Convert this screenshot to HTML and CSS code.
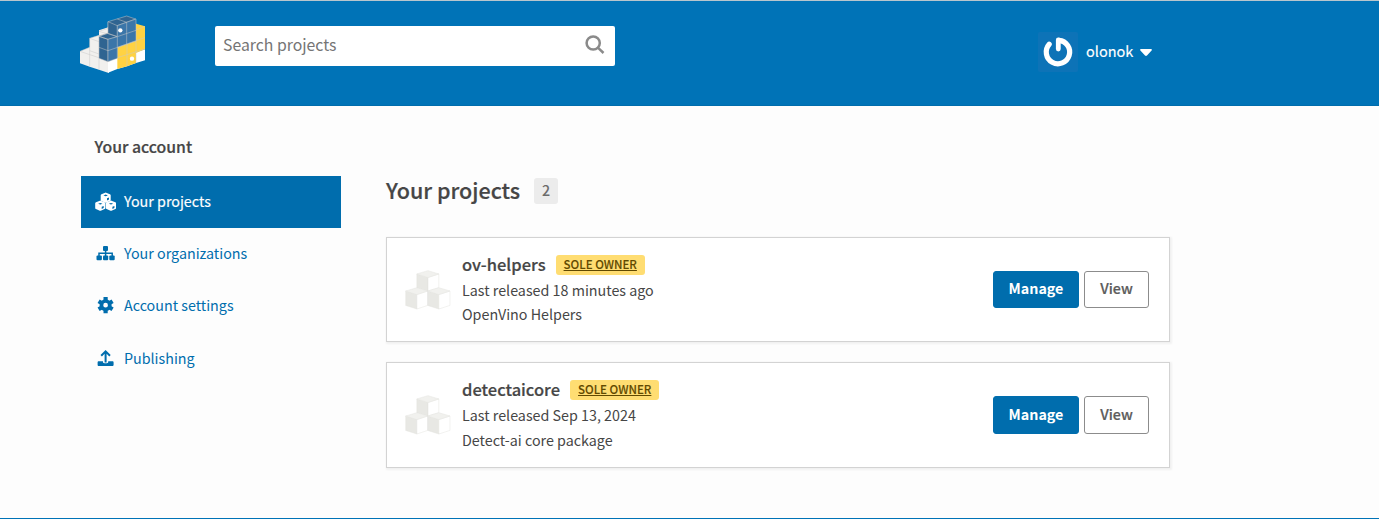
FILE: index.html
```html
<!DOCTYPE html>
<html lang="en">
<head>
<meta charset="utf-8">
<title>Your projects</title>
<link rel="stylesheet" href="styles.css">
</head>
<body>
<svg width="0" height="0" class="defs">
  <symbol id="boxes" viewBox="73 312 140 122">
    <g stroke="#e4e4e1" stroke-width="1.5" stroke-linejoin="round">
      <path fill="#e8e8e4" d="M109 324l34 11v41l-34-10z"/><path fill="#fff" d="M143 335l33-11v42l-33 10z"/><path fill="#f1f1ee" d="M109 324l34-10 33 10-33 11z"/>
      <path fill="#e8e8e4" d="M75 376l34 11v44l-34-11z"/><path fill="#fff" d="M109 387l33-11v44l-33 11z"/><path fill="#f1f1ee" d="M75 376l34-10 33 10-33 11z"/>
      <path fill="#e8e8e4" d="M142 376l34 11v44l-34-11z"/><path fill="#fff" d="M176 387l34-11v44l-34 11z"/><path fill="#f1f1ee" d="M142 376l34-10 34 10-34 11z"/>
    </g>
  </symbol>
</svg>
<header class="header">
  <a class="logo">
    <svg viewBox="27 42 204 183" width="68" height="61">
      <g stroke="#c9c9c9" stroke-width="1.5" stroke-linejoin="round">
        <path stroke="none" fill="#f1f0ee" d="M30 154l29-12v-27l28-9V91l30-10v137h-3l-27-9-28-9-29-10z"/>
        <path fill="none" d="M30 154l29 10 28 9M59 115v85M59 115l28 10M59 152l28 10M30 154l29-12M87 106v103M59 115l28-9 27 11M87 94l27 8M87 94l27-9"/>
        <path stroke="none" fill="#fff" d="M114 183l111-35v33l-27 8-27 10-29 8-28 11z"/>
        <path stroke="none" fill="#ffd242" d="M142 142l56-20V71l27 8v69l-27 11v30l-27 10-29 8z"/>
        <path fill="none" d="M198 90l27-11M198 122l27-9M171 132v67M198 122v67M142 173l83-26"/>
        <path fill="#2f6491" d="M87 108l27-9V65l56-17 27 9-56 20-27 22z"/>
        <path fill="#2f6491" d="M87 109l27 9v67l-27-10zM87 109l27-9 28 10-28 8zM114 65l28 12v33l-28-9z"/>
        <path fill="#3b76a9" d="M114 118l28-8V77l56-20v65l-56 20v33l-28 10z"/>
        <path fill="none" d="M87 142l27 10 84-29M142 110l56-19M142 110v32M170 67v65M142 57l28 10"/>
      </g>
      <circle cx="151" cy="91" r="6.500" fill="#fff"/><circle cx="186" cy="176" r="6.500" fill="#fff"/>
    </svg>
  </a>
  <div class="search"><span>Search projects</span>
    <svg viewBox="0 0 20 20" width="20" height="20" fill="none" stroke="#8a8a8a" stroke-width="2.5"><circle cx="8.200" cy="8" r="6.600"/><path d="M12.900 12.700l5.600 5.300"/></svg>
  </div>
  <div class="user">
    <svg class="avatar" viewBox="0 0 40 40" width="40" height="40"><rect width="40" height="40" rx="2" fill="#0d73b7"/><path d="M11.200 12.300A11.700 11.700 0 1 0 21 8.400" fill="none" stroke="#fff" stroke-width="5.200" stroke-linecap="round"/><path d="M20.300 8v9" stroke="#fff" stroke-width="4.800" stroke-linecap="round"/></svg>
    <span class="name">olonok</span>
    <svg viewBox="0 0 12 7" width="12" height="7"><path fill="#fff" d="M1.200 0h9.600c1 0 1.400 1 .8 1.600L7 6.500c-.6.6-1.400.6-2 0L.4 1.600C-.2 1 .2 0 1.200 0z"/></svg>
  </div>
</header>
<main class="content">
  <nav class="sidebar">
    <h2>Your account</h2>
    <a class="item active"><svg viewBox="0 0 22 20" width="22" height="20"><g fill="#fff" stroke="#fff" stroke-width="2.400" stroke-linejoin="round"><path d="M11.700 1.800l3.800 1.500v4.600l-3.800 1.700-3.800-1.700V3.300z"/><path d="M6.300 9.800l3.900 1.500v4.600l-3.900 1.700-3.900-1.700v-4.600zM17 9.800l3.900 1.500v4.600L17 17.600l-3.900-1.700v-4.600z"/></g><path d="M9.500 3.400l2.200-.8 2.200.8-2.200.8zM13 6.300l2-.8v2l-2 .9zM4.100 11.800l2.200-.8 2.200.8-2.200.8zM7.700 14.800l2-.8v2l-2 .9zM14.800 11.800l2.200-.8 2.200.8-2.200.8zM18.400 14.800l2-.8v2l-2 .9z" fill="#006dad"/></svg><span>Your projects</span></a>
    <a class="item"><svg viewBox="0 0 22 20" width="22" height="20"><g fill="#006dad"><rect x="9" y="2" width="5" height="5" rx="1"/><rect x="2.500" y="11.500" width="5.400" height="4.800" rx="1"/><rect x="9" y="11.500" width="5.200" height="4.800" rx="1"/><rect x="15.300" y="11.500" width="5.400" height="4.800" rx="1"/></g><path d="M11.600 6.500v6M5 12V9.300h13.200V12" fill="none" stroke="#006dad" stroke-width="1.500"/></svg><span>Your organizations</span></a>
    <a class="item"><svg viewBox="0 0 22 20" width="22" height="20"><g fill="none" stroke="#006dad"><circle cx="11.600" cy="9.200" r="4.200" stroke-width="3.700"/><path d="M11.600 1.100v3M11.600 14.300v3M4.600 5.200l2.600 1.500M16 11.700l2.600 1.500M4.600 13.200l2.600-1.500M16 6.700l2.600-1.500" stroke-width="4.200"/></g></svg><span>Account settings</span></a>
    <a class="item"><svg viewBox="0 0 22 20" width="22" height="20"><path d="M11.600 13.500V3M7.200 6.700l4.400-4.400L16 6.700" fill="none" stroke="#006dad" stroke-width="2"/><path fill="#006dad" d="M4.800 12.300h4.200v1c0 1.300 5.200 1.300 5.200 0v-1h4.200c.8 0 1.200.5 1.200 1.200v2.300c0 .8-.5 1.300-1.200 1.300H4.800c-.8 0-1.200-.5-1.200-1.300v-2.300c0-.7.4-1.200 1.200-1.200z"/></svg><span>Publishing</span></a>
  </nav>
  <section class="main">
    <h1><span>Your projects</span> <span class="count">2</span></h1>
    <article class="card">
      <svg class="boxes" width="46" height="40"><use href="#boxes"/></svg>
      <div class="info"><h3><span>ov-helpers</span><a class="badge">SOLE OWNER</a></h3><p>Last released 18 minutes ago</p><p>OpenVino Helpers</p></div>
      <a class="btn primary">Manage</a><a class="btn">View</a>
    </article>
    <article class="card second">
      <svg class="boxes" width="46" height="40"><use href="#boxes"/></svg>
      <div class="info"><h3><span>detectaicore</span><a class="badge">SOLE OWNER</a></h3><p>Last released Sep 13, 2024</p><p>Detect-ai core package</p></div>
      <a class="btn primary">Manage</a><a class="btn">View</a>
    </article>
  </section>
</main>
</body>
</html>
```
FILE: styles.css
```css
* { box-sizing: border-box; }
body { margin: 0; height: 519px; overflow: hidden; background: #fdfdfd; color: #464646; font: 14.3px/24px "Noto Sans CJK SC", "Open Sans", sans-serif; border-bottom: 1px solid #0073b7; }
.defs { display: none; }
h1, h2, h3, p { margin: 0; white-space: nowrap; }
h1, h2, h3, .btn { -webkit-text-stroke: .2px currentColor; }
.header { height: 106px; background: #0073b7; border-top: 1px solid #b9c6cd; border-bottom: 1px solid #006dad; display: flex; align-items: flex-start; padding: 0 227px 0 79px; }
.logo { display: flex; padding-top: 13px; width: 136px; }
.search { margin-top: 25px; width: 400px; height: 40px; background: #fff; border-radius: 2px; display: flex; justify-content: space-between; align-items: center; padding: 0 10px 3px 8px; color: #757575; font-size: 15.8px; }
.search span { padding-top: 1px; }
.user { margin-left: auto; margin-top: 31px; display: flex; align-items: center; color: #fff; -webkit-text-stroke: .15px #fff; font-size: 14.5px; }
.avatar { margin-right: 8px; }
.name { width: 48px; margin-right: 6px; padding-bottom: 2px; }
.content { display: flex; padding-left: 81px; }
.sidebar { width: 260px; padding-top: 29px; }
.sidebar h2 { font-size: 15.8px; font-weight: 500; line-height: 24px; padding-left: 13.5px; margin-bottom: 17px; }
.item { display: flex; align-items: center; height: 52.3px; padding-left: 13px; gap: 8px; color: #006dad; white-space: nowrap; }
.item span { padding-bottom: 2px; }
.item.active { height: 52px; background: #006dad; color: #fff; -webkit-text-stroke: .15px #fff; }
.main { width: 784px; margin-left: 45px; padding-top: 64px; }
h1 { display: flex; align-items: center; gap: 14px; height: 42px; font-size: 21.5px; font-weight: 500; }
h1 span:first-child { padding-bottom: 2px; }
.count { width: 24px; height: 26px; line-height: 24px; border-radius: 3px; background: #ececec; color: #6b6b6b; text-align: center; font-size: 14.3px; -webkit-text-stroke: 0; }
.card { height: 105px; margin-top: 25px; background: #fff; border: 1px solid #d3d3d3; box-shadow: 1px 1px 2px 1px rgba(0,0,0,.05); display: flex; align-items: center; padding: 0 20px 0 18px; }
.card.second { height: 106px; margin-top: 20px; }
.boxes { margin-right: 11px; }
.info { flex: 1; line-height: 24.5px; padding-bottom: 1px; }
h3 { display: flex; align-items: center; height: 26px; font-size: 16.5px; font-weight: 500; gap: 10px; }
h3 span { padding-bottom: 1px; }
.badge { height: 20px; line-height: 19px; padding: 0 8px; border-radius: 3px; background: #ffdd72; color: #614900; font-size: 11.5px; text-decoration: underline; -webkit-text-stroke: .1px currentColor; }
.btn { height: 37px; line-height: 32px; width: 65px; border: 1px solid #8c8c8c; border-radius: 3px; text-align: center; font-weight: 500; color: #5c5c5c; margin-left: 5px; }
.btn.primary { width: 86px; background: #006dad; border-color: #006dad; color: #fff; font-weight: 700; -webkit-text-stroke: 0; }
.second .btn { height: 38px; line-height: 33px; }
```
